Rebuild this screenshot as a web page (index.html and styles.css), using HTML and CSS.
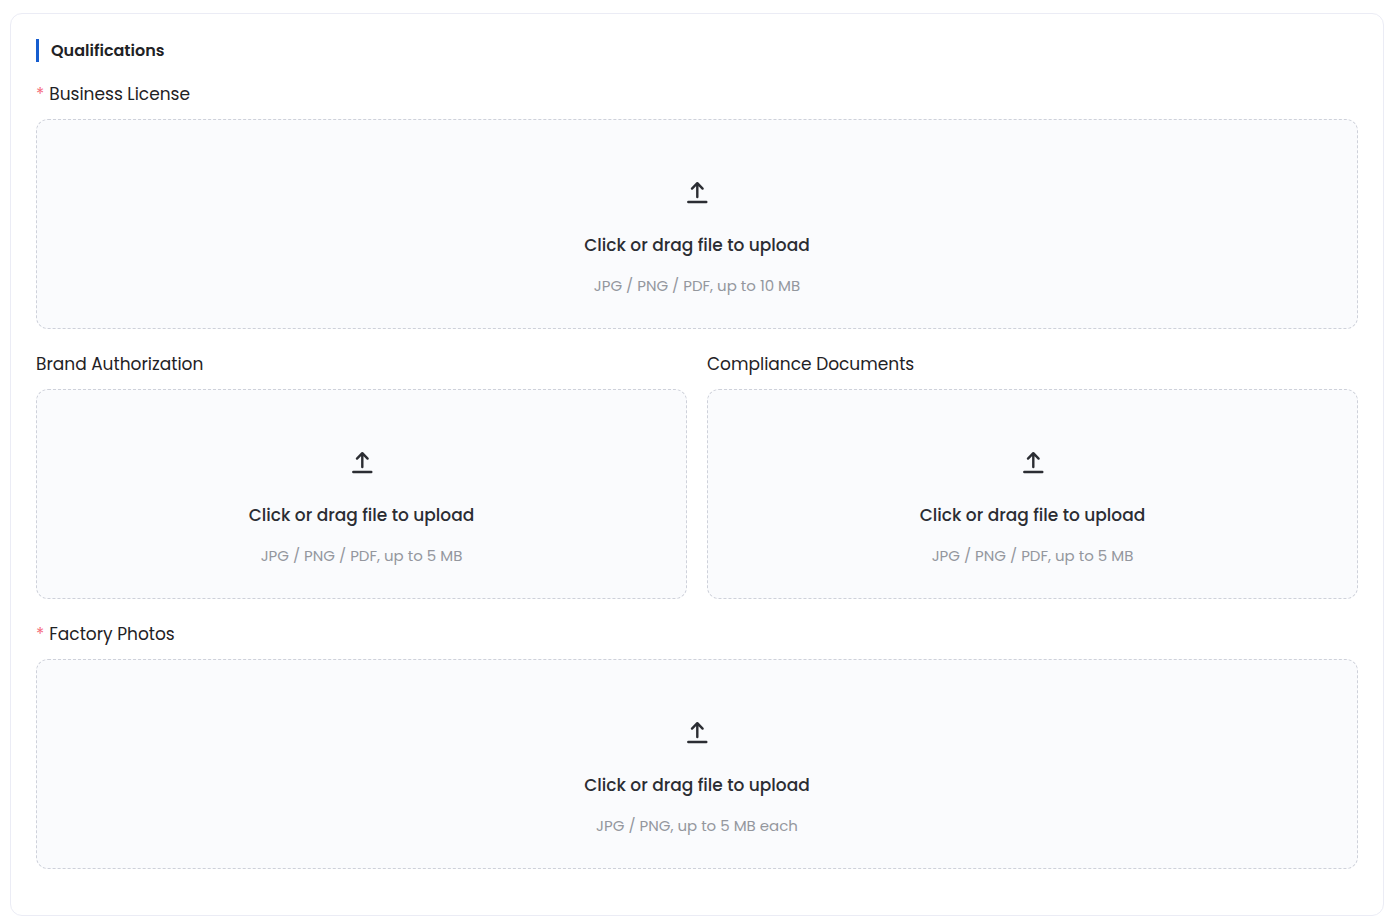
FILE: index.html
```html
<!DOCTYPE html>
<html lang="en">
<head>
    <meta charset="UTF-8">
    <meta name="viewport" content="width=device-width, initial-scale=1.0">
    <title>Qualifications</title>
    <link rel="stylesheet" href="styles.css">
</head>
<body>
    <form class="card">
        <h2 class="card-title">Qualifications</h2>
        <div class="form-grid">
            <div class="form-item form-item-full">
                <label class="form-label" for="license"><span class="required">*</span>Business License</label>
                <label class="upload">
                    <input type="file" id="license" class="upload-input" accept=".jpg,.png,.pdf" required>
                    <svg class="upload-icon" viewBox="0 0 24 24"><path d="M12.3 17V3.6M7 8.6L12.3 3.2l5.3 5.4M3.3 22h18"/></svg>
                    <span class="upload-text">Click or drag file to upload</span>
                    <span class="upload-hint">JPG / PNG / PDF, up to 10 MB</span>
                </label>
            </div>
            <div class="form-item">
                <label class="form-label" for="brand">Brand Authorization</label>
                <label class="upload">
                    <input type="file" id="brand" class="upload-input" accept=".jpg,.png,.pdf">
                    <svg class="upload-icon" viewBox="0 0 24 24"><path d="M12.3 17V3.6M7 8.6L12.3 3.2l5.3 5.4M3.3 22h18"/></svg>
                    <span class="upload-text">Click or drag file to upload</span>
                    <span class="upload-hint">JPG / PNG / PDF, up to 5 MB</span>
                </label>
            </div>
            <div class="form-item">
                <label class="form-label" for="compliance">Compliance Documents</label>
                <label class="upload">
                    <input type="file" id="compliance" class="upload-input" accept=".jpg,.png,.pdf">
                    <svg class="upload-icon" viewBox="0 0 24 24"><path d="M12.3 17V3.6M7 8.6L12.3 3.2l5.3 5.4M3.3 22h18"/></svg>
                    <span class="upload-text">Click or drag file to upload</span>
                    <span class="upload-hint">JPG / PNG / PDF, up to 5 MB</span>
                </label>
            </div>
            <div class="form-item form-item-full">
                <label class="form-label" for="photos"><span class="required">*</span>Factory Photos</label>
                <label class="upload">
                    <input type="file" id="photos" class="upload-input" accept=".jpg,.png" multiple required>
                    <svg class="upload-icon" viewBox="0 0 24 24"><path d="M12.3 17V3.6M7 8.6L12.3 3.2l5.3 5.4M3.3 22h18"/></svg>
                    <span class="upload-text">Click or drag file to upload</span>
                    <span class="upload-hint">JPG / PNG, up to 5 MB each</span>
                </label>
            </div>
        </div>
    </form>
</body>
</html>
```
FILE: styles.css
```css
* {
    box-sizing: border-box;
}

body {
    margin: 0;
    padding: 13px 16px 0 10px;
    background: #ffffff;
    color: #1f2225;
    font-family: Poppins, Inter, "Open Sans", sans-serif;
}

.card {
    padding: 25px 25px 46px;
    border: 1px solid #ebecf5;
    border-radius: 12px;
    background: #ffffff;
}

.card-title {
    margin: 0 0 19px;
    padding-left: 12px;
    border-left: 3px solid #165dcf;
    font-size: 16px;
    font-weight: 600;
    line-height: 23px;
}

.form-grid {
    display: grid;
    grid-template-columns: 1fr 1fr;
    gap: 22px 20px;
}

.form-item-full {
    grid-column: 1 / -1;
}

.form-label {
    display: block;
    margin-bottom: 11px;
    font-size: 17px;
    line-height: 27px;
}

.required {
    margin-right: 5px;
    color: #f56c7c;
}

.upload {
    position: relative;
    display: flex;
    flex-direction: column;
    align-items: center;
    padding: 60px 20px 30px;
    border: 1px dashed #ced1da;
    border-radius: 12px;
    background: #fafbfd;
    cursor: pointer;
}

/* invisible, but still takes clicks and dropped files */
.upload-input {
    position: absolute;
    inset: 0;
    width: 100%;
    height: 100%;
    opacity: 0;
    cursor: pointer;
}

.upload-icon {
    width: 24px;
    height: 24px;
    fill: none;
    stroke: #2b2d33;
    stroke-width: 2.4;
    stroke-linecap: round;
    stroke-linejoin: round;
}

.upload-text {
    margin: 28px 0 16px;
    color: #2b2d33;
    font-size: 17px;
    font-weight: 500;
    line-height: 26px;
}

.upload-hint {
    color: #94979e;
    font-size: 15px;
    line-height: 24px;
}
```
